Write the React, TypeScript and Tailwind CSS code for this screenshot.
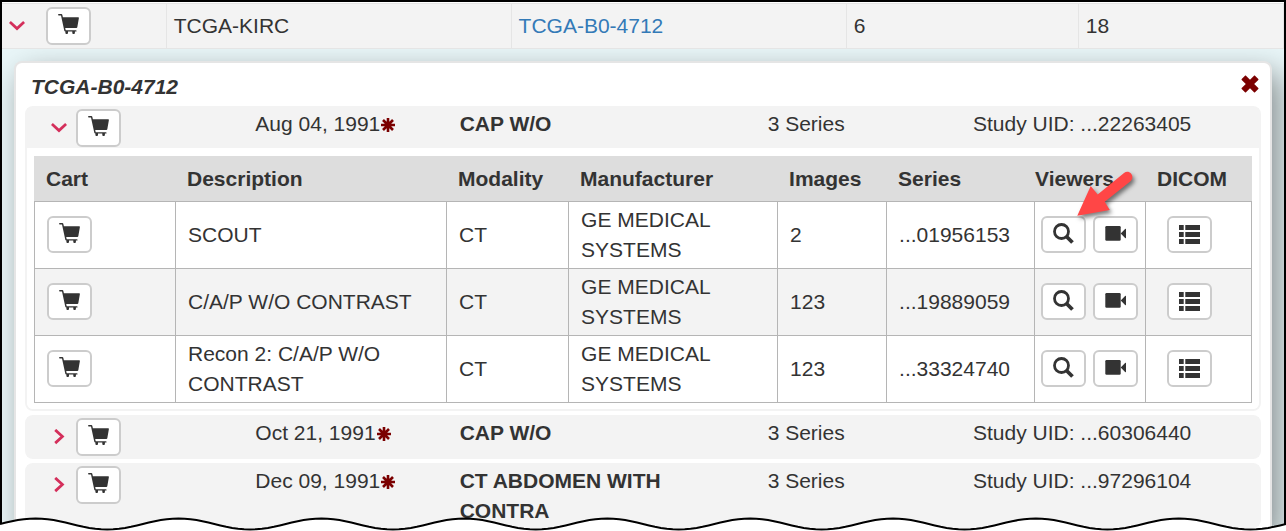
import type { ReactNode } from "react";

type Series = {
  description: string;
  modality: string;
  manufacturer: string;
  images: number;
  uid: string;
};

type Study = {
  date: string;
  description: string;
  count: number;
  uid: string;
  series?: Series[];
};

const studies: Study[] = [
  {
    date: "Aug 04, 1991",
    description: "CAP W/O",
    count: 3,
    uid: "...22263405",
    series: [
      { description: "SCOUT", modality: "CT", manufacturer: "GE MEDICAL SYSTEMS", images: 2, uid: "...01956153" },
      { description: "C/A/P W/O CONTRAST", modality: "CT", manufacturer: "GE MEDICAL SYSTEMS", images: 123, uid: "...19889059" },
      { description: "Recon 2: C/A/P W/O CONTRAST", modality: "CT", manufacturer: "GE MEDICAL SYSTEMS", images: 123, uid: "...33324740" },
    ],
  },
  { date: "Oct 21, 1991", description: "CAP W/O", count: 3, uid: "...60306440" },
  { date: "Dec 09, 1991", description: "CT ABDOMEN WITH CONTRA", count: 3, uid: "...97296104" },
];

function CartIcon() {
  return (
    <svg viewBox="0 0 21 21" className="h-[21px] w-[21px]" fill="currentColor" aria-hidden="true">
      <path d="M.8 0h2.600c.5 0 .8.200.9.700l.6 2.500h15.300c.5 0 .8.300.7.800l-1.600 9.300c-.1.500-.4.800-.9.800H7.200l.5 2.200h10.200c.9 0 .9 1.200 0 1.200h-1v1.500c0 1.400-2.600 1.400-2.600 0v-1.500H10v1.500c0 1.400-2.600 1.400-2.600 0v-1.500c-.7 0-1-.2-1.100-.7L3 1.500H.8C-.2 1.500-.2 0 .8 0z" />
    </svg>
  );
}

function SearchIcon() {
  return (
    <svg viewBox="0 0 21 21" className="h-[21px] w-[21px]" fill="none" stroke="currentColor" aria-hidden="true">
      <circle cx="8.500" cy="8.500" r="7" strokeWidth="2.800" />
      <path d="M13.500 13.500l6 6" strokeWidth="3.800" />
    </svg>
  );
}

function VideoIcon() {
  return (
    <svg viewBox="0 0 21 21" className="h-[21px] w-[21px]" fill="currentColor" aria-hidden="true">
      <rect x="0.300" y="3" width="15.400" height="14.800" rx="1.200" />
      <path d="M15.700 10.400l4.400-4.300c.5-.5.9-.3.900.3v8.200c0 .6-.4.800-.9.300z" />
    </svg>
  );
}

function ListIcon() {
  return (
    <svg viewBox="0 0 21 21" className="h-[21px] w-[21px]" fill="currentColor" aria-hidden="true">
      <path d="M0 2h4.700v5H0zM6.300 2H21v5H6.300zM0 9h4.700v5H0zM6.300 9H21v5H6.300zM0 16h4.700v5H0zM6.300 16H21v5H6.300z" />
    </svg>
  );
}

function CloseIcon() {
  return (
    <svg viewBox="0 0 18 18" className="h-[18px] w-[18px]" fill="currentColor" aria-hidden="true">
      <path d="M4 .7L.7 4c-.3.3-.3.700 0 1L4.800 9 .7 13c-.3.3-.3.700 0 1L4 17.300c.3.3.7.3 1 0L9 13.200l4 4.100c.3.3.7.3 1 0l3.300-3.300c.3-.3.3-.7 0-1L13.200 9l4.100-4c.3-.3.3-.7 0-1L14 .7c-.3-.3-.7-.3-1 0L9 4.800 5 .7C4.700.4 4.300.4 4 .7z" />
    </svg>
  );
}

function AsteriskIcon() {
  return (
    <svg viewBox="0 0 14 14" className="ml-px inline h-[14px] w-[14px] text-[#7b0000]" stroke="currentColor" strokeWidth="2.600" aria-hidden="true">
      <path d="M7 0v14M0 7h14M2 2l10 10M12 2L2 12" />
    </svg>
  );
}

function Chevron({ open, label }: { open?: boolean; label: string }) {
  return (
    <button type="button" aria-label={label} aria-expanded={!!open} className="flex h-4 w-4 shrink-0 items-center justify-center text-[#d42f5b]">
      <svg viewBox="0 0 16 16" className="h-4 w-4" fill="none" stroke="currentColor" strokeWidth="2.800" aria-hidden="true">
        <path d={open ? "M0.900 4l7.100 6.500 7.100-6.500" : "M4.200.9l7.200 6.600-7.200 6.600"} />
      </svg>
    </button>
  );
}

function IconButton({ label, children, tall }: { label: string; children: ReactNode; tall?: boolean }) {
  return (
    <button
      type="button"
      aria-label={label}
      className={`flex w-[45px] shrink-0 items-start justify-center rounded-md border-2 border-[#cccccc] bg-white pt-[5px] text-[#333333] ${tall ? "h-[38px]" : "h-[37px]"}`}
    >
      {children}
    </button>
  );
}

function PointerArrow() {
  return (
    <svg viewBox="0 0 70 60" className="pointer-events-none absolute -top-[51px] left-[29px] z-10 h-[60px] w-[70px] drop-shadow-[2px_3px_2px_rgba(0,0,0,0.5)]" aria-hidden="true">
      <path d="M7.300 50.700L20.700 21l7 8.500L54 8c5.500-4 11.500 3.500 6.500 8.300L34.700 36.700l5.100 8.200z" fill="#ff4646" />
    </svg>
  );
}

function SeriesTable({ rows }: { rows: Series[] }) {
  const th = "h-[46px] border-b border-[#b5b5b5] bg-[#dddddd] text-left font-bold";
  const td = "border-r border-b border-[#b5b5b5] px-3 py-[3px]";
  const actions = "border-r border-b border-[#b5b5b5] pb-px";
  return (
    <table className="w-full table-fixed border-separate border-spacing-0">
      <colgroup>
        <col className="w-[11.66%]" />
        <col className="w-[22.25%]" />
        <col className="w-[10.02%]" />
        <col className="w-[17.16%]" />
        <col className="w-[8.95%]" />
        <col className="w-[12.15%]" />
        <col className="w-[9.11%]" />
        <col className="w-[8.7%]" />
      </colgroup>
      <thead>
        <tr>
          <th className={`${th} pl-3`}>Cart</th>
          <th className={`${th} pl-[11px]`}>Description</th>
          <th className={`${th} pl-[11px]`}>Modality</th>
          <th className={`${th} pl-[11px]`}>Manufacturer</th>
          <th className={`${th} pl-[11px]`}>Images</th>
          <th className={`${th} pl-[11px]`}>Series</th>
          <th className={th}>Viewers</th>
          <th className={`${th} pl-[11px]`}>DICOM</th>
        </tr>
      </thead>
      <tbody>
        {rows.map((row, i) => (
          <tr key={row.uid} className="even:bg-[#f3f3f3]">
            <td className={`${actions} border-l pl-3`}>
              <IconButton label={`Add series ${row.uid} to cart`}>
                <CartIcon />
              </IconButton>
            </td>
            <td className={td}>{row.description}</td>
            <td className={td}>{row.modality}</td>
            <td className={td}>{row.manufacturer}</td>
            <td className={td}>{row.images}</td>
            <td className={td}>{row.uid}</td>
            <td className={`${actions} pl-[6px]`}>
              <div className="relative flex gap-[7px]">
                <IconButton label="View series">
                  <SearchIcon />
                </IconButton>
                <IconButton label="Play series">
                  <VideoIcon />
                </IconButton>
                {i === 0 && <PointerArrow />}
              </div>
            </td>
            <td className={`${actions} pl-[21px]`}>
              <IconButton label="DICOM tags">
                <ListIcon />
              </IconButton>
            </td>
          </tr>
        ))}
      </tbody>
    </table>
  );
}

function StudyPanel({ study }: { study: Study }) {
  const open = !!study.series;
  return (
    <section className="rounded-lg border-2 border-[#f3f3f3]">
      <div className="grid min-h-10 grid-cols-12 bg-[#f3f3f3] pt-px">
        <div className="col-span-2 flex h-[38px] items-center gap-[9px] pl-6">
          <Chevron open={open} label={`Toggle study ${study.date}`} />
          <IconButton label={`Add study ${study.date} to cart`} tall>
            <CartIcon />
          </IconButton>
        </div>
        <div className="col-span-2 pl-[23px] whitespace-nowrap">
          {study.date}
          <AsteriskIcon />
        </div>
        <div className="col-span-3 px-[22px] font-bold">{study.description}</div>
        <div className="col-span-2 px-[22px]">{study.count} Series</div>
        <div className="col-span-3 pl-[22px]">Study UID: {study.uid}</div>
      </div>
      {study.series && (
        <div className="rounded-b-md bg-white px-[7px] pt-2 pb-[6px]">
          <SeriesTable rows={study.series} />
        </div>
      )}
    </section>
  );
}

const wave = Array.from({ length: 217 }, (_, i) => {
  const y = 7 - 5.5 * Math.sin((i / 24) * 2 * Math.PI);
  return `${((i / 216) * 1286).toFixed(1)} ${y.toFixed(2)}`;
}).join("L");

function TornEdge() {
  return (
    <svg viewBox="0 0 1286 14" preserveAspectRatio="none" className="absolute inset-x-0 bottom-0 z-20 h-[14px] w-full" aria-hidden="true">
      <path d={`M${wave}L1286 14L0 14Z`} fill="#ffffff" />
      <path d={`M${wave}`} fill="none" stroke="#000000" strokeWidth="2" vectorEffect="non-scaling-stroke" />
    </svg>
  );
}

export default function App() {
  const cell = "border-y border-r border-[#e5e5e5] py-[3px] pl-[7px]";
  return (
    <main className="relative overflow-hidden bg-white font-['Liberation_Sans',Arial,sans-serif] text-[21px] leading-[30px] text-[#333333]">
      <div className="border-x-2 border-t-2 border-black pt-px">
        <table className="w-full table-fixed border-separate border-spacing-0 bg-[#f3f3f3]">
          <colgroup>
            <col className="w-[12.85%]" />
            <col className="w-[26.9%]" />
            <col className="w-[26.15%]" />
            <col className="w-[18.1%]" />
            <col />
          </colgroup>
          <tbody>
            <tr>
              <td className={cell}>
                <div className="flex items-center gap-[21px]">
                  <Chevron open label="Toggle subject TCGA-B0-4712" />
                  <IconButton label="Add subject to cart" tall>
                    <CartIcon />
                  </IconButton>
                </div>
              </td>
              <td className={cell}>TCGA-KIRC</td>
              <td className={cell}>
                <a href="#subject" className="text-[#337ab7]">TCGA-B0-4712</a>
              </td>
              <td className={cell}>6</td>
              <td className={cell}>18</td>
            </tr>
          </tbody>
        </table>
        <div className="overflow-hidden bg-[#e9f6f8] px-3 pt-3">
          <div className="rounded-t-lg border-2 border-b-0 border-[#e5e5e5] bg-white px-[9px] pt-[9px] pb-[3px] shadow-[8px_12px_30px_rgba(0,0,0,0.42)]">
            <div className="mb-1 flex items-start justify-between pr-[2px] pl-[6px]">
              <h1 className="font-bold italic">TCGA-B0-4712</h1>
              <button type="button" aria-label="Close" className="mt-[3px] text-[#7b0000]">
                <CloseIcon />
              </button>
            </div>
            <div className="flex flex-col gap-1">
              {studies.map((study) => (
                <StudyPanel key={study.uid} study={study} />
              ))}
            </div>
          </div>
        </div>
      </div>
      <TornEdge />
    </main>
  );
}
